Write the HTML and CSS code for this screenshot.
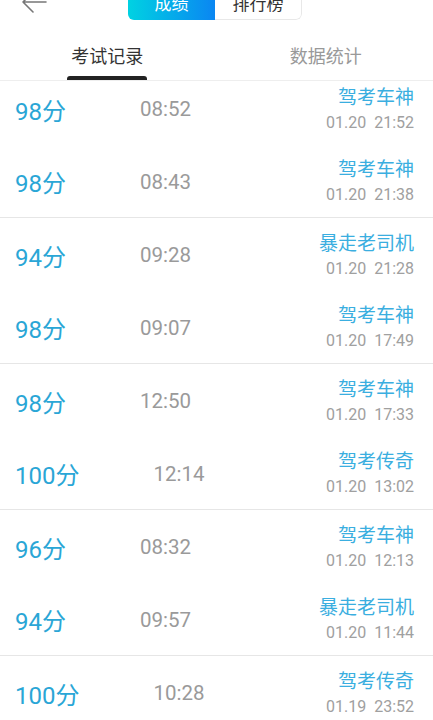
FILE: index.html
```html
<!DOCTYPE html>
<html lang="zh-CN">
<head>
    <meta charset="UTF-8" />
    <meta name="viewport" content="width=device-width, initial-scale=1" />
    <title>成绩</title>
    <link rel="stylesheet" href="styles.css">
</head>
<body>
    <div class="topbar">
        <div class="back">
            <svg width="28" height="24" viewBox="0 0 28 24">
                <path d="M26 12H3M13 2L3 12l10 10" fill="none" stroke="#777" stroke-width="1.6" stroke-linecap="round" stroke-linejoin="round"/>
            </svg>
        </div>
        <div class="segment">
            <span class="seg seg-on">成绩</span>
            <span class="seg">排行榜</span>
        </div>
        <div></div>
    </div>

    <div class="tabs">
        <div class="tab active">考试记录</div>
        <div class="tab">数据统计</div>
    </div>

    <div class="list">
        <div class="group">
            <div class="row">
                <span class="score">98分</span>
                <span class="used">08:52</span>
                <div class="meta">
                    <div class="title">驾考车神</div>
                    <div class="date">01.20&nbsp;&nbsp;21:52</div>
                </div>
            </div>
            <div class="row">
                <span class="score">98分</span>
                <span class="used">08:43</span>
                <div class="meta">
                    <div class="title">驾考车神</div>
                    <div class="date">01.20&nbsp;&nbsp;21:38</div>
                </div>
            </div>
        </div>
        <div class="group">
            <div class="row">
                <span class="score">94分</span>
                <span class="used">09:28</span>
                <div class="meta">
                    <div class="title">暴走老司机</div>
                    <div class="date">01.20&nbsp;&nbsp;21:28</div>
                </div>
            </div>
            <div class="row">
                <span class="score">98分</span>
                <span class="used">09:07</span>
                <div class="meta">
                    <div class="title">驾考车神</div>
                    <div class="date">01.20&nbsp;&nbsp;17:49</div>
                </div>
            </div>
        </div>
        <div class="group">
            <div class="row">
                <span class="score">98分</span>
                <span class="used">12:50</span>
                <div class="meta">
                    <div class="title">驾考车神</div>
                    <div class="date">01.20&nbsp;&nbsp;17:33</div>
                </div>
            </div>
            <div class="row">
                <span class="score">100分</span>
                <span class="used">12:14</span>
                <div class="meta">
                    <div class="title">驾考传奇</div>
                    <div class="date">01.20&nbsp;&nbsp;13:02</div>
                </div>
            </div>
        </div>
        <div class="group">
            <div class="row">
                <span class="score">96分</span>
                <span class="used">08:32</span>
                <div class="meta">
                    <div class="title">驾考车神</div>
                    <div class="date">01.20&nbsp;&nbsp;12:13</div>
                </div>
            </div>
            <div class="row">
                <span class="score">94分</span>
                <span class="used">09:57</span>
                <div class="meta">
                    <div class="title">暴走老司机</div>
                    <div class="date">01.20&nbsp;&nbsp;11:44</div>
                </div>
            </div>
        </div>
        <div class="group">
            <div class="row">
                <span class="score">100分</span>
                <span class="used">10:28</span>
                <div class="meta">
                    <div class="title">驾考传奇</div>
                    <div class="date">01.19&nbsp;&nbsp;23:52</div>
                </div>
            </div>
        </div>
    </div>
</body>
</html>
```

FILE: styles.css
```css
body {
    margin: 0;
    background: #fff;
    font-family: Roboto, "Noto Sans CJK SC", sans-serif;
    overflow: hidden;
}
.topbar {
    display: grid;
    grid-template-columns: 1fr auto 1fr;
    align-items: center;
    height: 36px;
    margin-top: -16px;
}
.back {
    padding-left: 20px;
    height: 24px;
}
.segment {
    display: flex;
    height: 36px;
    border-radius: 6px;
    overflow: hidden;
    margin-right: 3px;
}
.seg {
    width: 87px;
    display: flex;
    align-items: center;
    justify-content: center;
    font-size: 17px;
    color: #333;
    border: 1px solid #e8e8e8;
    border-left: none;
    border-radius: 0 6px 6px 0;
    box-sizing: border-box;
}
.seg-on {
    color: #fff;
    border: none;
    border-radius: 0;
    background: linear-gradient(90deg, #00d2e2, #0a86f2);
}
.tabs {
    display: flex;
    height: 60px;
    border-bottom: 1px solid #eee;
}
.tab {
    flex: 1;
    display: flex;
    flex-direction: column;
    align-items: center;
    padding-top: 27px;
    box-sizing: border-box;
    font-size: 18px;
    line-height: 20px;
    color: #999;
}
.tab.active {
    color: #333;
    padding-right: 4px;
}
.tab.active::after {
    content: "";
    width: 80px;
    height: 4px;
    margin-top: 9px;
    background: #222;
    border-radius: 3px 3px 0 0;
}
.list {
    margin-top: -9px;
}
.group {
    border-bottom: 1px solid #e6e6e6;
}
.row {
    display: flex;
    align-items: center;
    height: 72.5px;
    padding: 0 19px 0 15px;
}
.score {
    font-size: 24px;
    color: #2aa6d6;
    padding-top: 2px;
}
.used {
    margin-left: 74px;
    font-size: 20.5px;
    color: #9a9a9a;
    padding-top: 2px;
}
.meta {
    margin-left: auto;
    text-align: right;
    padding-top: 3px;
}
.title {
    font-size: 19px;
    line-height: 24px;
    color: #3aaee0;
}
.date {
    margin-top: 2px;
    font-size: 16px;
    line-height: 22px;
    color: #a0a0a0;
}
```
